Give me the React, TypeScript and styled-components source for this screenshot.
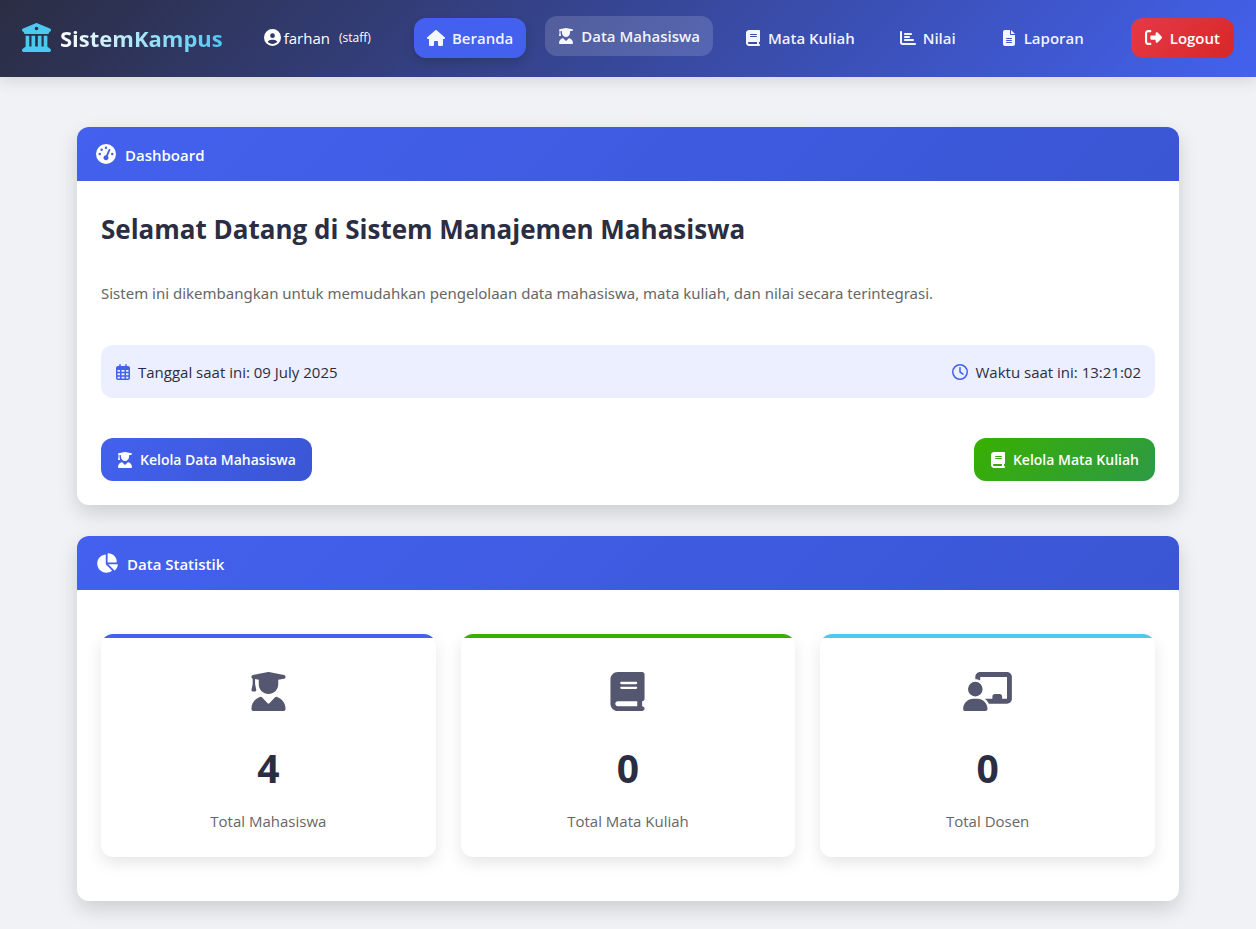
import React from "react";
import styled, { createGlobalStyle } from "styled-components";
import {
  FaBuildingColumns,
  FaCircleUser,
  FaHouse,
  FaUserGraduate,
  FaBook,
  FaChartBar,
  FaFileLines,
  FaRightFromBracket,
  FaGaugeHigh,
  FaRegCalendarDays,
  FaRegClock,
  FaChartPie,
  FaChalkboardUser,
} from "react-icons/fa6";

const GlobalStyle = createGlobalStyle`
  *, *::before, *::after { box-sizing: border-box; }
  body {
    margin: 0;
    min-height: 100vh;
    background: #f0f2f5;
    color: #2b2d42;
    font-family: "Segoe UI", "Open Sans", "Noto Sans", sans-serif;
    font-size: 15px;
    line-height: 24px;
  }
  svg { flex: none; display: block; width: auto; height: 16px; }
  h1, h2, p { margin: 0; }
`;

const TopBar = styled.header`
  display: flex;
  align-items: center;
  height: 77px;
  padding: 0 22px 2px;
  background: linear-gradient(135deg, #2b2d42 0%, #4361ee 100%);
  box-shadow: 0 4px 15px rgba(0, 0, 0, 0.12);
  white-space: nowrap;
`;

const Brand = styled.a`
  display: flex;
  align-items: center;
  gap: 9px;
  color: #4cc9f0;
  text-decoration: none;

  svg { height: 29px; }
`;

const BrandName = styled.span`
  font-size: 22px;
  line-height: 32px;
  font-weight: 700;
  background: linear-gradient(90deg, #ffffff, #4cc9f0);
  background-clip: text;
  -webkit-background-clip: text;
  color: transparent;
`;

const UserInfo = styled.div`
  display: flex;
  align-items: center;
  gap: 3px;
  margin-left: 41px;
  color: #ffffff;

  svg { height: 17px; }
`;

const Role = styled.small`
  margin-left: 6px;
  font-size: 12px;
`;

const Nav = styled.nav`
  display: flex;
  align-items: center;
  gap: 19px;
  margin-left: auto;
`;

const NavLink = styled.a<{ $state?: "active" | "hover" }>`
  display: flex;
  align-items: center;
  gap: 7px;
  height: 40px;
  padding: 0 13px;
  border-radius: 12px;
  color: rgba(255, 255, 255, 0.95);
  font-weight: 600;
  text-decoration: none;
  background: ${(p) =>
    p.$state === "active" ? "#4361ee" : p.$state === "hover" ? "rgba(255, 255, 255, 0.15)" : "transparent"};
  box-shadow: ${(p) => (p.$state === "active" ? "0 4px 10px rgba(0, 0, 0, 0.15)" : "none")};
  transform: ${(p) => (p.$state === "hover" ? "translateY(-2px)" : "none")};
`;

const HomeIcon = styled(FaHouse)`
  width: 18px;
`;

const LogoutButton = styled.button`
  display: flex;
  align-items: center;
  gap: 8px;
  height: 40px;
  margin-left: 34px;
  padding: 0 14px;
  border: 0;
  border-radius: 12px;
  background: linear-gradient(135deg, #e63946, #d62828);
  color: #ffffff;
  font: inherit;
  font-weight: 600;

  svg { height: 17px; }
`;

const Main = styled.main`
  display: flex;
  flex-direction: column;
  gap: 31px;
  padding: 50px 77px 28px;
`;

const Card = styled.section`
  border-radius: 12px;
  background: #ffffff;
  box-shadow: 0 8px 20px rgba(0, 0, 0, 0.15);
`;

const CardHeader = styled.div`
  display: flex;
  align-items: center;
  gap: 9px;
  height: 54px;
  padding: 0 19px;
  border-radius: 12px 12px 0 0;
  background: linear-gradient(135deg, #4361ee, #3a56d4);
  color: #ffffff;

  svg { height: 20px; }
`;

const PieIcon = styled(FaChartPie)`
  width: 22px;
`;

const CardTitle = styled.h2`
  padding-top: 2px;
  font-size: 15px;
  line-height: 24px;
  font-weight: 600;
`;

const CardBody = styled.div`
  padding: 24px;
`;

const Heading = styled.h1`
  padding-top: 4px;
  font-size: 26px;
  line-height: 40px;
  font-weight: 700;
`;

const Lead = styled.p`
  margin-top: 32px;
  color: #666666;
  font-family: "Segoe UI", "Noto Sans", sans-serif;
`;

const InfoBar = styled.div`
  display: flex;
  align-items: center;
  justify-content: space-between;
  height: 53px;
  margin-top: 40px;
  padding: 0 14px;
  border-radius: 12px;
  background: #ebefff;
`;

const InfoItem = styled.span`
  display: flex;
  align-items: center;
  gap: 7px;

  svg { color: #4361ee; }
`;

const Actions = styled.div`
  display: flex;
  justify-content: space-between;
  margin-top: 40px;
`;

const ActionLink = styled.a<{ $tone: "blue" | "green" }>`
  display: flex;
  align-items: center;
  gap: 7px;
  height: 43px;
  padding: 0 16px;
  border-radius: 12px;
  background: ${(p) =>
    p.$tone === "blue"
      ? "linear-gradient(135deg, #4361ee, #3a56d4)"
      : "linear-gradient(135deg, #38b000, #2d9a46)"};
  color: #ffffff;
  font-size: 14px;
  font-weight: 600;
  text-decoration: none;
`;

const StatGrid = styled.div`
  display: grid;
  grid-template-columns: repeat(3, 1fr);
  gap: 25px;
  padding: 20px 0;
`;

const StatCard = styled.article`
  display: flex;
  flex-direction: column;
  align-items: center;
  overflow: hidden;
  padding-bottom: 24px;
  border-radius: 12px;
  background: #ffffff;
  box-shadow: 0 6px 16px rgba(0, 0, 0, 0.1);
`;

const StatStripe = styled.div<{ $color: string }>`
  align-self: stretch;
  height: 4px;
  margin-bottom: 34px;
  background: ${(p) => p.$color};
`;

const StatIcon = styled.div`
  color: #555770;

  svg { width: 49px; height: 39px; }
`;

const StatValue = styled.strong`
  margin-top: 33px;
  font-size: 39px;
  line-height: 48px;
  font-weight: 700;
`;

const StatLabel = styled.span`
  margin-top: 17px;
  color: #666666;
`;

const stats = [
  { label: "Total Mahasiswa", value: 4, color: "#4361ee", Icon: FaUserGraduate },
  { label: "Total Mata Kuliah", value: 0, color: "#38b000", Icon: FaBook },
  { label: "Total Dosen", value: 0, color: "#4cc9f0", Icon: FaChalkboardUser },
];

export default function App() {
  return (
    <>
      <GlobalStyle />
      <TopBar>
        <Brand href="#">
          <FaBuildingColumns />
          <BrandName>SistemKampus</BrandName>
        </Brand>
        <UserInfo>
          <FaCircleUser />
          <span>farhan</span>
          <Role>(staff)</Role>
        </UserInfo>
        <Nav>
          <NavLink href="#" $state="active"><HomeIcon />Beranda</NavLink>
          <NavLink href="#" $state="hover"><FaUserGraduate />Data Mahasiswa</NavLink>
          <NavLink href="#"><FaBook />Mata Kuliah</NavLink>
          <NavLink href="#"><FaChartBar />Nilai</NavLink>
          <NavLink href="#"><FaFileLines />Laporan</NavLink>
        </Nav>
        <LogoutButton type="button"><FaRightFromBracket />Logout</LogoutButton>
      </TopBar>
      <Main>
        <Card>
          <CardHeader>
            <FaGaugeHigh />
            <CardTitle>Dashboard</CardTitle>
          </CardHeader>
          <CardBody>
            <Heading>Selamat Datang di Sistem Manajemen Mahasiswa</Heading>
            <Lead>
              Sistem ini dikembangkan untuk memudahkan pengelolaan data mahasiswa, mata kuliah, dan nilai secara
              terintegrasi.
            </Lead>
            <InfoBar>
              <InfoItem><FaRegCalendarDays />Tanggal saat ini: 09 July 2025</InfoItem>
              <InfoItem><FaRegClock />Waktu saat ini: 13:21:02</InfoItem>
            </InfoBar>
            <Actions>
              <ActionLink href="#" $tone="blue"><FaUserGraduate />Kelola Data Mahasiswa</ActionLink>
              <ActionLink href="#" $tone="green"><FaBook />Kelola Mata Kuliah</ActionLink>
            </Actions>
          </CardBody>
        </Card>
        <Card>
          <CardHeader>
            <PieIcon />
            <CardTitle>Data Statistik</CardTitle>
          </CardHeader>
          <CardBody>
            <StatGrid>
              {stats.map(({ label, value, color, Icon }) => (
                <StatCard key={label}>
                  <StatStripe $color={color} />
                  <StatIcon><Icon /></StatIcon>
                  <StatValue>{value}</StatValue>
                  <StatLabel>{label}</StatLabel>
                </StatCard>
              ))}
            </StatGrid>
          </CardBody>
        </Card>
      </Main>
    </>
  );
}
